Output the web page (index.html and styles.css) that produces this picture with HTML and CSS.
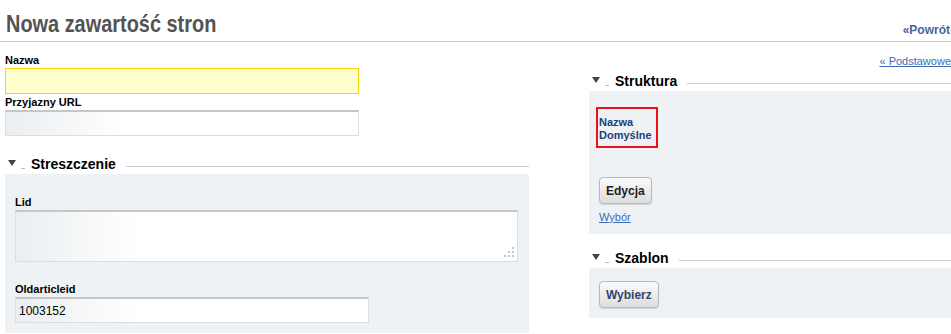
FILE: index.html
```html
<!DOCTYPE html>
<html lang="pl">
<head>
    <meta charset="UTF-8">
    <title>Nowa zawartość stron</title>
    <link rel="stylesheet" href="styles.css">
</head>
<body>
<div class="page">
    <div class="header">
        <h1><span>Nowa zawartość stron</span></h1>
        <a class="back" href="#">«Powrót</a>
    </div>

    <div class="columns">
        <div class="col-left">
            <div class="field">
                <label>Nazwa</label>
                <input type="text" class="required">
            </div>
            <div class="field">
                <label>Przyjazny URL</label>
                <input type="text">
            </div>

            <div class="section">
                <div class="section-head">
                    <span class="arrow"></span>
                    <span class="dash"></span>
                    <span class="section-title">Streszczenie</span>
                    <span class="rule"></span>
                </div>
                <div class="panel panel-summary">
                    <div class="field">
                        <label>Lid</label>
                        <div class="area"><textarea></textarea></div>
                    </div>
                    <div class="field field-gap">
                        <label>Oldarticleid</label>
                        <input type="text" value="1003152">
                    </div>
                </div>
            </div>
        </div>

        <div class="col-right">
            <div class="more"><a href="#">« Podstawowe</a></div>

            <div class="section section-first">
                <div class="section-head">
                    <span class="arrow"></span>
                    <span class="dash"></span>
                    <span class="section-title">Struktura</span>
                    <span class="rule"></span>
                </div>
                <div class="panel panel-structure">
                    <div class="picked">
                        <div>Nazwa</div>
                        <div>Domyślne</div>
                    </div>
                    <button class="btn">Edycja</button>
                    <a class="small-link" href="#">Wybór</a>
                </div>
            </div>

            <div class="section section-next">
                <div class="section-head">
                    <span class="arrow"></span>
                    <span class="dash"></span>
                    <span class="section-title">Szablon</span>
                    <span class="rule"></span>
                </div>
                <div class="panel panel-template">
                    <button class="btn btn-blue">Wybierz</button>
                </div>
            </div>
        </div>
    </div>
</div>
</body>
</html>
```

FILE: styles.css
```css
*{
    margin: 0;
    padding: 0;
    box-sizing: border-box;
}
html, body{
    overflow: hidden;
}
body{
    font-family: "Liberation Sans", Arial, sans-serif;
    color: #000;
    background: #fff;
}
.page{
    width: 951px;
    height: 334px;
}

/* naglowek */
.header{
    height: 42px;
    border-bottom: 1px solid #cccccc;
    display: flex;
    justify-content: space-between;
    align-items: flex-end;
    padding: 0 1px 0 6px;
}
.header h1{
    font-size: 24px;
    line-height: 28px;
    font-weight: bold;
    color: #535353;
    margin-bottom: 3px;
}
/* waski krój - brak Arial Narrow, wiec sciskamy */
.header h1 span{
    display: inline-block;
    transform: scaleX(0.83);
    transform-origin: left center;
}
.back{
    font-size: 12px;
    line-height: 14px;
    font-weight: bold;
    color: #46659a;
    text-decoration: none;
    margin-bottom: 4px;
}

/* kolumny */
.columns{
    display: flex;
    gap: 60px;
    padding-left: 5px;
}
.col-left{
    width: 524px;
    padding-top: 12px;
}
.col-right{
    flex: 1;
    padding-top: 13px;
}

/* pola */
.field label{
    display: block;
    font-size: 11px;
    line-height: 13px;
    font-weight: bold;
    margin-bottom: 1px;
}
.field + .field{
    margin-top: 2px;
}
.field input{
    display: block;
    width: 354px;
    height: 26px;
    border: 1px solid #dddddd;
    border-top: 2px solid #c6c6c6;
    background: linear-gradient(to right, #eaeef1, #ffffff 120px);
    font-family: "Liberation Sans", Arial, sans-serif;
    font-size: 12px;
    padding: 0 3px;
    color: #000;
}
.field input.required{
    border: 1px solid #fcd20a;
    background: #ffffcc;
}
.panel .field-gap{
    margin-top: 21px;
}
.area{
    position: relative;
}
.area textarea{
    display: block;
    width: 503px;
    height: 52px;
    resize: none;
    border: 1px solid #dddddd;
    border-top: 2px solid #c6c6c6;
    background: linear-gradient(to right, #eaeef1, #ffffff 120px);
}
.area::after{
    content: "";
    position: absolute;
    right: 5px;
    bottom: 5px;
    width: 2px;
    height: 2px;
    background: #c4c4c4;
    box-shadow: -4px 0 #c4c4c4, -8px 0 #c4c4c4, 0 -4px #c4c4c4, -4px -4px #c4c4c4, 0 -8px #c4c4c4;
}

/* sekcje */
.section{
    margin-top: 18px;
}
.section-first{
    margin-top: 3px;
}
.section-next{
    margin-top: 14px;
}
.section-head{
    height: 20px;
    display: flex;
    align-items: flex-start;
}
.arrow{
    width: 0;
    height: 0;
    border-left: 4px solid transparent;
    border-right: 4px solid transparent;
    border-top: 6px solid #444444;
    margin: 6px 0 0 3px;
}
.dash{
    width: 4px;
    height: 1px;
    background: #bbbbbb;
    margin: 14px 0 0 5px;
}
.section-title{
    font-size: 14px;
    line-height: 20px;
    font-weight: bold;
    margin-left: 6px;
}
.rule{
    flex: 1;
    height: 1px;
    background: #cccccc;
    margin: 12px 0 0 10px;
}
.panel{
    background: #eef2f5;
}
.panel-summary{
    padding: 22px 10px 10px;
}
.panel-structure{
    padding: 16px 7px 10px 10px;
}
.panel-template{
    padding: 13px 10px 10px;
}

/* prawa kolumna */
.more{
    text-align: right;
    font-size: 11px;
    line-height: 13px;
}
.more a, .small-link{
    color: #3a6cb4;
    text-decoration: underline;
}
.picked{
    width: 62px;
    border: 2px solid #ee1111;
    padding: 7px 0 4px 1px;
    margin-left: -3px;
    font-size: 11px;
    line-height: 13px;
    font-weight: bold;
    color: #1f3f7c;
}
.btn{
    display: block;
    height: 27px;
    padding: 0 6px;
    margin-top: 29px;
    border: 1px solid #b9b9b9;
    border-radius: 4px;
    background: linear-gradient(#fbfbfb, #dddddd);
    box-shadow: 0 1px 1px rgba(0, 0, 0, 0.12);
    font-family: "Liberation Sans", Arial, sans-serif;
    font-size: 12px;
    font-weight: bold;
    color: #222222;
}
.btn-blue{
    margin-top: 0;
    color: #34466e;
}
.small-link{
    display: block;
    width: fit-content;
    margin-top: 7px;
    font-size: 11px;
    line-height: 13px;
}
```
